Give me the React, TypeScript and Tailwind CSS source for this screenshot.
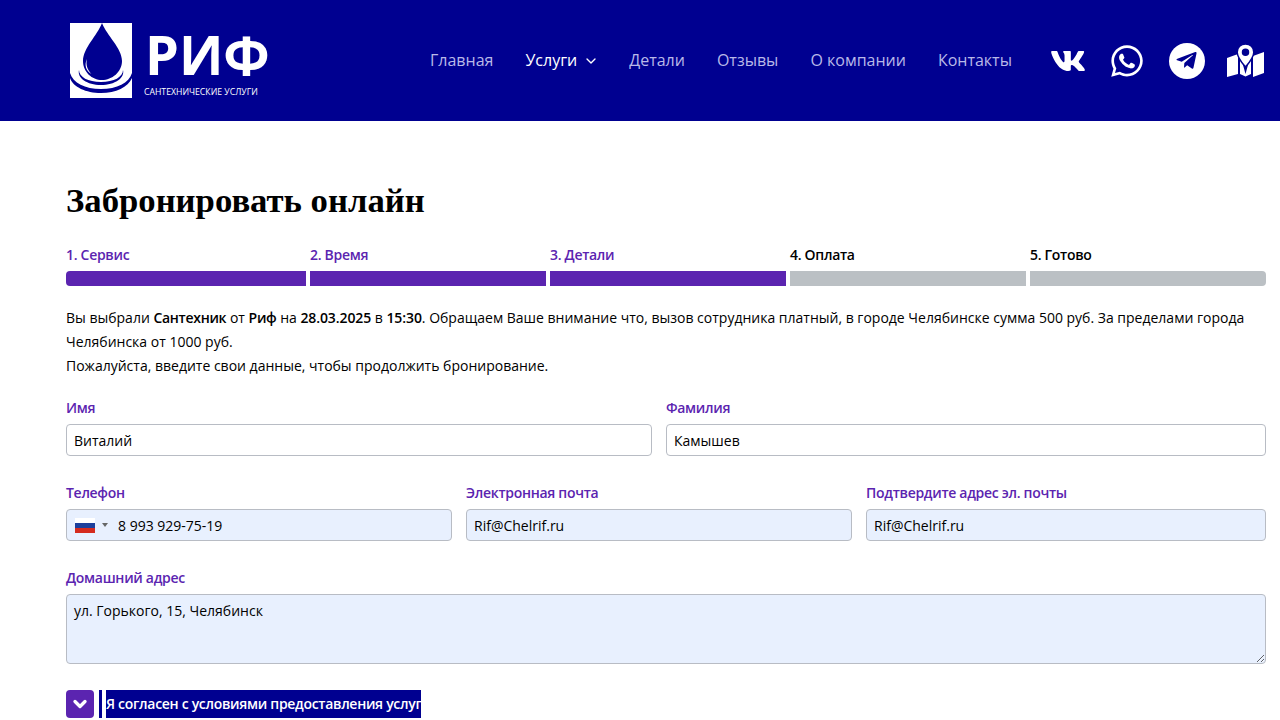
import React from "react";
import { ChevronDown } from "lucide-react";
import { FaVk, FaWhatsapp, FaTelegramPlane } from "react-icons/fa";

const labelCls = "block text-[14px] font-semibold tracking-[-0.3px] leading-[20px] text-[#5b24b0] mb-1.5";
const inputCls =
  "w-full h-8 px-[7px] text-[14px] text-black border border-[#b8bcc4] rounded-[4px] outline-none";
const strongCls = "font-semibold tracking-[-0.3px]";
const numberCls = "font-semibold tracking-[-0.1px]";

const Logo = () => (
  <div className="flex items-start gap-[9px] w-[200px] h-[76px]">
    <svg width="63" height="75" viewBox="0 0 63 75" className="shrink-0">
      <rect width="62" height="75" fill="#fff" />
      <path d="M0 50c3 10 15 16 31 16s28-6 31-16v5c-4 9-16 15-31 15S3 64 0 55z" fill="#000090" />
      <path d="M9 47c0 7 9 12 22 12s22-5 22-12c2 8-8 15-22 15S7 55 9 47z" fill="#000090" />
      <path
        d="M32 0C27 13 13 25 13 38c0 11 9 19 19 19s20-8 20-19C52 25 37 13 32 0z"
        fill="#000090"
      />
      <path d="M17 36c-1.500 6 .5 11 4.500 15-5.500-3-7.500-9-4.500-15z" fill="#fff" />
    </svg>
    <div className="flex flex-col ml-[3px]">
      <span className="text-[54px] leading-[54px] font-bold text-white mt-[4px] whitespace-nowrap">РИФ</span>
      <span className="text-[8.700px] leading-[12px] text-white mt-[5px] -ml-[1px] whitespace-nowrap">
        САНТЕХНИЧЕСКИЕ УСЛУГИ
      </span>
    </div>
  </div>
);

const MapIcon = () => (
  <svg width="37" height="34" viewBox="0 0 37 34" fill="#fff">
    <path d="M0 14l11-4v20L0 33z" />
    <path d="M13 10l5.500 20 5.500-20v20l-5.500 2.500L13 30z" />
    <path d="M26 12l11-4v21l-11 4z" />
    <path
      fillRule="evenodd"
      stroke="#000090"
      strokeWidth="1.500"
      d="M18.500 0c4.700 0 8.300 3.500 8.300 8.200 0 4.300-5 11-8.300 14.800-3.300-3.800-8.300-10.500-8.300-14.800C10.200 3.500 13.800 0 18.500 0zm0 5.200a3 3 0 100 6 3 3 0 000-6z"
    />
  </svg>
);

const Header = () => (
  <header className="h-[121px] bg-[#000090] flex items-center pl-[70px] pr-[16px]">
    <Logo />
    <nav className="flex items-center gap-8 ml-[160px] -mt-[2px] text-[16px] text-[#b9b9e8]">
      <a>Главная</a>
      <a className="flex items-center gap-2 text-white">
        Услуги <ChevronDown size={16} className="-mx-[2px] mt-[2px]" />
      </a>
      <a>Детали</a>
      <a>Отзывы</a>
      <a>О компании</a>
      <a>Контакты</a>
    </nav>
    <div className="flex items-center ml-auto text-white">
      <FaVk size={36} />
      <FaWhatsapp size={36} className="ml-[23px]" />
      <div className="ml-[24px] w-9 h-9 rounded-full bg-white flex items-center justify-center text-[#000090]">
        <FaTelegramPlane size={23} className="-ml-[2px]" />
      </div>
      <div className="ml-[22px]">
        <MapIcon />
      </div>
    </div>
  </header>
);

const steps = [
  { label: "1. Сервис", done: true },
  { label: "2. Время", done: true },
  { label: "3. Детали", done: true },
  { label: "4. Оплата", done: false },
  { label: "5. Готово", done: false },
];

const Steps = () => (
  <div className="flex gap-1 mt-[22px]">
    {steps.map((s, i) => (
      <div key={i} className={i === 0 ? "w-[240px]" : "flex-1"}>
        <div
          className={
            "text-[14px] font-semibold tracking-[-0.3px] leading-[20px] mb-[6px] " +
            (s.done ? "text-[#5b24b0]" : "text-black")
          }
        >
          {s.label}
        </div>
        <div
          className={
            "h-[15px] " +
            (s.done ? "bg-[#5b24b0]" : "bg-[#bbc0c4]") +
            (i === 0 ? " rounded-l-[4px]" : "") +
            (i === 4 ? " rounded-r-[4px]" : "")
          }
        />
      </div>
    ))}
  </div>
);

export default function App() {
  return (
    <div className="h-screen overflow-hidden bg-white text-black font-['Open_Sans',sans-serif]">
      <Header />
      <main className="pl-[66px] pr-[14px] pt-[58px]">
        <h1 className="text-[34.700px] leading-[44px] font-['Liberation_Serif',serif] font-bold text-black">
          Забронировать онлайн
        </h1>
        <Steps />
        <div className="mt-[20px] text-[14px] leading-[24px]">
          <div>
            Вы выбрали <b className={strongCls}>Сантехник</b> от <b className={strongCls}>Риф</b> на{" "}
            <b className={numberCls}>28.03.2025</b> в <b className={numberCls}>15:30</b>. Обращаем Ваше внимание что,
            вызов сотрудника платный, в городе Челябинске сумма 500 руб. За пределами города Челябинска от 1000 руб.
          </div>
          <div>Пожалуйста, введите свои данные, чтобы продолжить бронирование.</div>
        </div>
        <div className="grid grid-cols-[586px_1fr] gap-x-[14px] mt-[20px]">
          <div>
            <label className={labelCls}>Имя</label>
            <input className={inputCls + " bg-white"} defaultValue="Виталий" />
          </div>
          <div>
            <label className={labelCls}>Фамилия</label>
            <input className={inputCls + " bg-white"} defaultValue="Камышев" />
          </div>
        </div>
        <div className="grid grid-cols-[386px_386px_1fr] gap-x-[14px] mt-[27px]">
          <div>
            <label className={labelCls}>Телефон</label>
            <div className="h-8 flex items-center bg-[#e8f0fe] border border-[#b8bcc4] rounded-[4px] pl-[8px] text-[14px]">
              <div className="w-[20px] h-[15px] flex flex-col shrink-0">
                <div className="h-[5px] bg-white" />
                <div className="h-[5px] bg-[#1c3f9c]" />
                <div className="h-[5px] bg-[#d52b1e]" />
              </div>
              <div className="ml-[7px] w-0 h-0 border-x-[3px] border-x-transparent border-t-[4px] border-t-[#666]" />
              <span className="ml-[10px]">8 993 929-75-19</span>
            </div>
          </div>
          <div>
            <label className={labelCls}>Электронная почта</label>
            <input className={inputCls + " bg-[#e8f0fe]"} defaultValue="Rif@Chelrif.ru" />
          </div>
          <div>
            <label className={labelCls}>Подтвердите адрес эл. почты</label>
            <input className={inputCls + " bg-[#e8f0fe]"} defaultValue="Rif@Chelrif.ru" />
          </div>
        </div>
        <div className="mt-[27px]">
          <label className={labelCls}>Домашний адрес</label>
          <textarea
            className="block w-full h-[70px] px-[7px] py-[4px] text-[14px] leading-[24px] bg-[#e8f0fe] border border-[#b8bcc4] rounded-[4px] outline-none"
            defaultValue="ул. Горького, 15, Челябинск"
          />
        </div>
        <div className="flex items-center h-7 mt-[26px]">
          <div className="w-7 h-7 rounded-[4px] bg-[#5b24b0] flex items-center justify-center text-white">
            <ChevronDown size={20} strokeWidth={4} />
          </div>
          <div className="ml-[5px] w-[3px] h-7 bg-[#000090]" />
          <div className="ml-[4px] w-[315px] h-7 bg-[#000090] text-white text-[14px] font-semibold tracking-[-0.3px] leading-7 overflow-hidden whitespace-nowrap">
            Я согласен с условиями предоставления услуг
          </div>
        </div>
      </main>
    </div>
  );
}
